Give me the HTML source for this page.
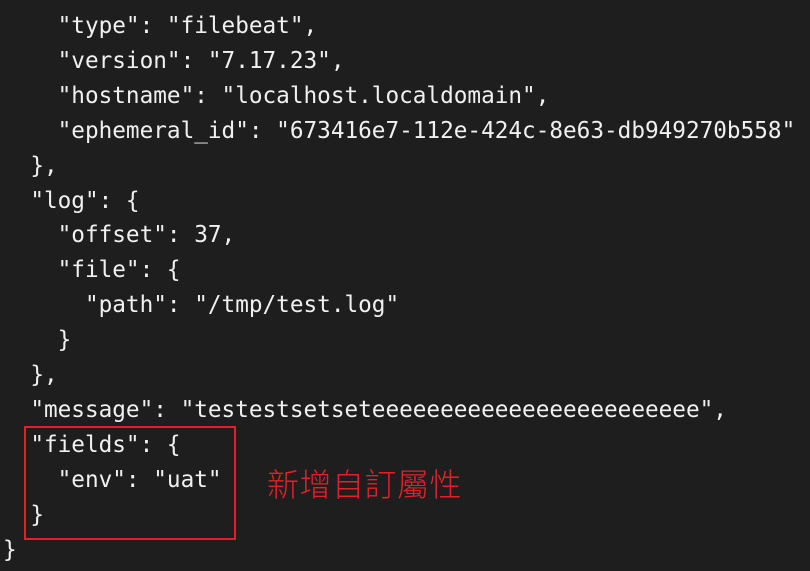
<!DOCTYPE html>
<html><head><meta charset="utf-8"><style>
html,body{margin:0;padding:0;width:810px;height:571px;overflow:hidden;background:#1e1e1e}
pre{position:absolute;left:3px;top:9px;margin:0;font-family:"DejaVu Sans Mono","Liberation Mono",monospace;font-size:22.7px;line-height:34.9px;color:#f0f0f0;white-space:pre}
.box{position:absolute;left:24px;top:426px;width:208px;height:110px;border:2px solid #e3202a}
.note{position:absolute;left:267px;top:463px;font-family:"Noto Sans CJK TC","WenQuanYi Zen Hei",sans-serif;font-weight:300;font-size:32px;line-height:40px;color:#e3202a;letter-spacing:0.5px}
</style></head><body>
<pre>    "type": "filebeat",
    "version": "7.17.23",
    "hostname": "localhost.localdomain",
    "ephemeral_id": "673416e7-112e-424c-8e63-db949270b558"
  },
  "log": {
    "offset": 37,
    "file": {
      "path": "/tmp/test.log"
    }
  },
  "message": "testestsetseteeeeeeeeeeeeeeeeeeeeeeee",
  "fields": {
    "env": "uat"
  }
}</pre>
<div class="box"></div>
<div class="note">新增自訂屬性</div>
</body></html>
